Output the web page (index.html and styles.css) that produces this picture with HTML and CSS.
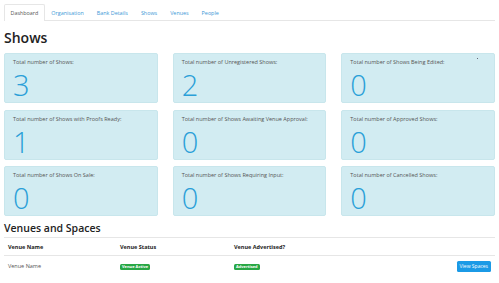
FILE: index.html
```html
<!DOCTYPE html>
<html lang="en">
<head>
    <meta charset="UTF-8">
    <meta name="viewport" content="width=device-width, initial-scale=1.0">
    <title>Dashboard</title>
    <link rel="stylesheet" href="styles.css">
</head>
<body>
    <div class="container">
        <ul class="tabs">
            <li><a href="#" class="active">Dashboard</a></li>
            <li><a href="#">Organisation</a></li>
            <li><a href="#">Bank Details</a></li>
            <li><a href="#">Shows</a></li>
            <li><a href="#">Venues</a></li>
            <li><a href="#">People</a></li>
        </ul>

        <h1>Shows</h1>

        <div class="stats">
            <div class="stat">
                <div class="stat-label">Total number of Shows:</div>
                <div class="stat-value">3</div>
            </div>
            <div class="stat">
                <div class="stat-label">Total number of Unregistered Shows:</div>
                <div class="stat-value">2</div>
            </div>
            <div class="stat">
                <span class="dot"></span>
                <div class="stat-label">Total number of Shows Being Edited:</div>
                <div class="stat-value">0</div>
            </div>
            <div class="stat">
                <div class="stat-label">Total number of Shows with Proofs Ready:</div>
                <div class="stat-value">1</div>
            </div>
            <div class="stat">
                <div class="stat-label">Total number of Shows Awaiting Venue Approval:</div>
                <div class="stat-value">0</div>
            </div>
            <div class="stat">
                <div class="stat-label">Total number of Approved Shows:</div>
                <div class="stat-value">0</div>
            </div>
            <div class="stat">
                <div class="stat-label">Total number of Shows On Sale:</div>
                <div class="stat-value">0</div>
            </div>
            <div class="stat">
                <div class="stat-label">Total number of Shows Requiring Input:</div>
                <div class="stat-value">0</div>
            </div>
            <div class="stat">
                <div class="stat-label">Total number of Cancelled Shows:</div>
                <div class="stat-value">0</div>
            </div>
        </div>

        <h2>Venues and Spaces</h2>

        <table class="venues">
            <thead>
                <tr>
                    <th class="col-name">Venue Name</th>
                    <th class="col-status">Venue Status</th>
                    <th>Venue Advertised?</th>
                    <th class="col-actions"></th>
                </tr>
            </thead>
            <tbody>
                <tr>
                    <td>Venue Name</td>
                    <td><span class="badge">Venue Active</span></td>
                    <td><span class="badge">Advertised</span></td>
                    <td class="actions"><a href="#" class="btn">View Spaces</a></td>
                </tr>
            </tbody>
        </table>
    </div>
</body>
</html>
```

FILE: styles.css
```css
body {
    font-family: "Open Sans", "Noto Sans", Arial, sans-serif;
    margin: 0;
    padding: 0;
    background-color: #fff;
    color: #333;
}
.container {
    padding: 4px 4px 0 4px;
}
.tabs {
    display: flex;
    list-style: none;
    margin: 0;
    padding: 0;
    height: 16px;
    border-bottom: 1px solid #e6e6e6;
}
.tabs a {
    display: block;
    height: 16px;
    line-height: 16px;
    padding: 0 5.5px;
    font-size: 5.4px;
    color: #3d98d6;
    text-decoration: none;
    border: 1px solid transparent;
    border-bottom: none;
    box-sizing: border-box;
}
.tabs a.active {
    color: #555;
    background-color: #fff;
    border-color: #e6e6e6;
    height: 17px;
    border-radius: 2px 2px 0 0;
}
h1 {
    margin: 7px 0 6px 0;
    font-size: 14px;
    line-height: 19px;
    font-weight: 600;
    color: #222;
}
.stats {
    display: grid;
    grid-template-columns: repeat(3, 1fr);
    gap: 6.5px 15px;
}
.stat {
    position: relative;
    height: 50px;
    box-sizing: border-box;
    padding: 5px 8px 0 8px;
    background-color: #d2ecf2;
    border: 1px solid #c8e6ec;
    border-radius: 2px;
}
.stat-label {
    font-size: 5.5px;
    line-height: 7px;
    color: #555;
}
.stat-value {
    font-size: 29px;
    line-height: normal;
    font-weight: 300;
    color: #2a9fd8;
    margin-top: -1px;
}
.dot {
    position: absolute;
    top: 4px;
    right: 16px;
    width: 1px;
    height: 1px;
    background-color: #667;
}
h2 {
    margin: 5px 0 2px 0;
    font-size: 10.5px;
    line-height: 14px;
    font-weight: 600;
    color: #222;
}
.venues {
    width: 100%;
    border-collapse: collapse;
    font-size: 5.5px;
}
.venues th,
.venues td {
    text-align: left;
    padding: 0 4px;
    border-top: 1px solid #e6e6e6;
}
.venues th {
    height: 17px;
    font-weight: 700;
    color: #222;
}
.venues td {
    height: 20px;
    color: #555;
}
.col-name {
    width: 104px;
}
.col-status {
    width: 106px;
}
.col-actions {
    width: 1%;
}
.badge {
    display: inline-block;
    background-color: #28a745;
    color: #fff;
    font-size: 4px;
    font-weight: 700;
    line-height: 6px;
    padding: 0 2px;
    border-radius: 1.5px;
}
.actions {
    text-align: right;
    white-space: nowrap;
}
.btn {
    display: inline-block;
    background-color: #1b9ae6;
    color: #fff;
    font-size: 5px;
    line-height: 11px;
    padding: 0 3px;
    border-radius: 1.5px;
    text-decoration: none;
}
```
